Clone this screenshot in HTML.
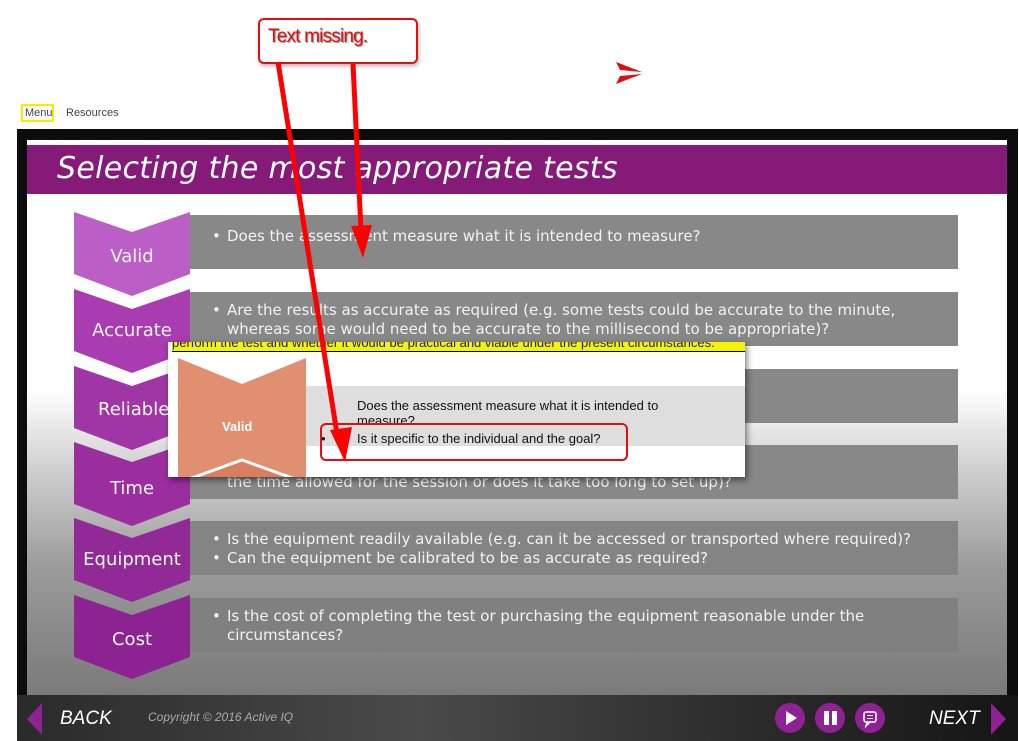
<!DOCTYPE html>
<html><head><meta charset="utf-8"><style>
*{margin:0;padding:0;box-sizing:border-box}
body{width:1019px;height:741px;background:#fff;position:relative;overflow:hidden;font-family:"Liberation Sans",sans-serif}
.abs{position:absolute}
.frame{left:17px;top:129px;width:1001px;height:612px;background:#0c0c0c}
.slide{left:27px;top:140px;width:980px;height:555px;background:linear-gradient(#fff 0,#fff 250px,#cfcfcf 330px,#9a9a9a 430px,#7a7a7a 555px)}
.title{left:27px;top:145px;width:980px;height:49px;background:#861a78;color:#fff;font-family:"DejaVu Sans",sans-serif;font-style:italic;font-size:30px;font-weight:300;padding:6px 0 0 30px;letter-spacing:0.3px}
.box{left:190px;width:768px;height:54px;background:#888;color:#f2f2f2;font-family:"DejaVu Sans",sans-serif;font-size:15px;line-height:19px;padding:9px 10px 0 37px;white-space:nowrap}
.box span{position:absolute;left:22px}
.chev{left:74px;width:116px;height:86px}
.chev div{position:absolute;left:0;width:116px;top:34px;text-align:center;color:#f5f5f5;font-family:"DejaVu Sans",sans-serif;font-size:18px}
.bar{left:17px;top:695px;width:1001px;height:46px;background:linear-gradient(90deg,#2a2a2a,#4a4a4a 40%,#2a2a2a 75%,#151515)}
.nav{color:#fff;font-style:italic;font-size:19px;top:708px}
.btn{top:703px;width:30px;height:30px;border-radius:50%;background:#8e2293}
</style></head><body>
<div class="abs" style="left:21px;top:104px;width:33px;height:18px;border:2px solid #f2f000"></div>
<div class="abs" style="left:25px;top:107px;font-size:11px;color:#444">Menu</div>
<div class="abs" style="left:66px;top:107px;font-size:11px;color:#444">Resources</div>
<svg class="abs" style="left:612px;top:60px" width="36" height="26"><path d="M4 2 L30 12 L8 10Z M8 16 L30 14 L4 24Z" fill="#e01010"/></svg>

<div class="abs frame"></div>
<div class="abs slide"></div>
<div class="abs title">Selecting the most appropriate tests</div>

<div class="abs box" style="top:215px;padding-top:12px"><span>•</span>Does the assessment measure what it is intended to measure?</div>
<div class="abs box" style="top:292px"><span>•</span>Are the results as accurate as required (e.g. some tests could be accurate to the minute,<br>whereas some would need to be accurate to the millisecond to be appropriate)?</div>
<div class="abs box" style="top:369px"><span>•</span>Can the test be used with a large number of people and still<br>&nbsp;</div>
<div class="abs box" style="top:445px"><span>•</span>How long will the test take to complete (e.g. does this fit into<br>the time allowed for the session or does it take too long to set up)?</div>
<div class="abs box" style="top:521px;background:#848484"><span>•</span>Is the equipment readily available (e.g. can it be accessed or transported where required)?<br><span style="top:28px">•</span>Can the equipment be calibrated to be as accurate as required?</div>
<div class="abs box" style="top:598px;background:#808080"><span>•</span>Is the cost of completing the test or purchasing the equipment reasonable under the<br>circumstances?</div>

<svg class="abs" style="left:74px;top:212px" width="116" height="470">
<g>
<path d="M0 0 L58 20 L116 0 L116 62 L58 84 L0 62Z" fill="#bb5ec6"/>
<path d="M0 0 L58 20 L116 0 L116 62 L58 84 L0 62Z" fill="#a83cb0" transform="translate(0,77)"/>
<path d="M0 0 L58 20 L116 0 L116 62 L58 84 L0 62Z" fill="#a036a6" transform="translate(0,154)"/>
<path d="M0 0 L58 20 L116 0 L116 62 L58 84 L0 62Z" fill="#9a2e9e" transform="translate(0,230)"/>
<path d="M0 0 L58 20 L116 0 L116 62 L58 84 L0 62Z" fill="#912a96" transform="translate(0,306)"/>
<path d="M0 0 L58 20 L116 0 L116 62 L58 84 L0 62Z" fill="#8d2292" transform="translate(0,383)"/>
</g></svg>
<div class="abs chev" style="top:212px"><div>Valid</div></div>
<div class="abs chev" style="top:289px"><div style="top:31px">Accurate</div></div>
<div class="abs chev" style="top:366px"><div style="top:33px;left:24px;width:auto">Reliable</div></div>
<div class="abs chev" style="top:442px"><div style="top:36px">Time</div></div>
<div class="abs chev" style="top:518px"><div style="top:31px">Equipment</div></div>
<div class="abs chev" style="top:595px"><div style="top:34px">Cost</div></div>

<!-- popup -->
<div class="abs" style="left:168px;top:342px;width:577px;height:135px;background:#fff;box-shadow:2px 3px 6px rgba(0,0,0,.5);overflow:hidden">
 <div class="abs" style="left:4px;top:0;width:573px;height:10px;background:#f4f400;border-bottom:1px solid #000;overflow:hidden"><div style="font-size:13px;line-height:13px;margin-top:-6px;color:#222;white-space:nowrap">perform the test and whether it would be practical and viable under the present circumstances.</div></div>
 <div class="abs" style="left:137px;top:44px;width:440px;height:60px;background:#dedede"></div>
 <svg class="abs" style="left:10px;top:16px" width="128" height="119"><path d="M0 0 L64 26 L128 0 L128 119 L0 119Z" fill="#e09070"/><path d="M0 125 L64 102 L128 125Z" fill="#d97e5e" stroke="#fff" stroke-width="3"/></svg>
 <div class="abs" style="left:54px;top:77px;color:#fff;font-weight:bold;font-size:13px">Valid</div>
 <div class="abs" style="left:189px;top:56px;font-size:13px;line-height:15px;color:#111;width:330px">Does the assessment measure what it is intended to measure?</div>
 <div class="abs" style="left:153px;top:89px;font-size:13px;color:#111">•</div>
 <div class="abs" style="left:189px;top:89px;font-size:13px;color:#111">Is it specific to the individual and the goal?</div>
</div>
<div class="abs" style="left:320px;top:423px;width:308px;height:38px;border:2px solid #e01010;border-radius:6px"></div>

<!-- callout -->
<div class="abs" style="left:258px;top:18px;width:160px;height:46px;border:2px solid #e01010;border-radius:6px;background:#fff;box-shadow:1px 2px 4px rgba(0,0,0,.3)"></div>
<div class="abs" style="left:268px;top:26px;color:#e01010;font-size:19px;letter-spacing:-0.8px;text-shadow:1px 1px 1px #888">Text missing.</div>
<svg class="abs" style="left:0;top:0" width="1019" height="741">
<line x1="278" y1="62" x2="338" y2="440" stroke="#f00" stroke-width="5"/>
<path d="M330 430 L352 427 L345 462Z" fill="#f00"/>
<line x1="353" y1="64" x2="361" y2="230" stroke="#f00" stroke-width="5"/>
<path d="M351 226 L372 225 L363 258Z" fill="#f00"/>
</svg>

<!-- bottom bar -->
<div class="abs bar"></div>
<svg class="abs" style="left:27px;top:703px" width="16" height="32"><path d="M15 0 L15 32 L0 16Z" fill="#8e2293"/></svg>
<div class="abs nav" style="left:60px">BACK</div>
<div class="abs" style="left:148px;top:710px;color:#aaa;font-style:italic;font-size:12px">Copyright © 2016 Active IQ</div>
<div class="abs btn" style="left:775px"><svg width="30" height="30"><path d="M11 8 L22 15 L11 22Z" fill="#fff"/></svg></div>
<div class="abs btn" style="left:815px"><svg width="30" height="30"><rect x="9" y="8" width="5" height="14" fill="#fff"/><rect x="17" y="8" width="5" height="14" fill="#fff"/></svg></div>
<div class="abs btn" style="left:855px"><svg width="30" height="30"><rect x="9" y="9" width="12" height="10" rx="2" fill="none" stroke="#fff" stroke-width="1.5"/><path d="M12 19 L11 23 L15 19" fill="none" stroke="#fff" stroke-width="1.5"/><line x1="12" y1="12.5" x2="18" y2="12.5" stroke="#fff"/><line x1="12" y1="15.5" x2="18" y2="15.5" stroke="#fff"/></svg></div>
<div class="abs nav" style="left:929px">NEXT</div>
<svg class="abs" style="left:991px;top:703px" width="16" height="32"><path d="M0 0 L0 32 L15 16Z" fill="#8e2293"/></svg>
</body></html>
